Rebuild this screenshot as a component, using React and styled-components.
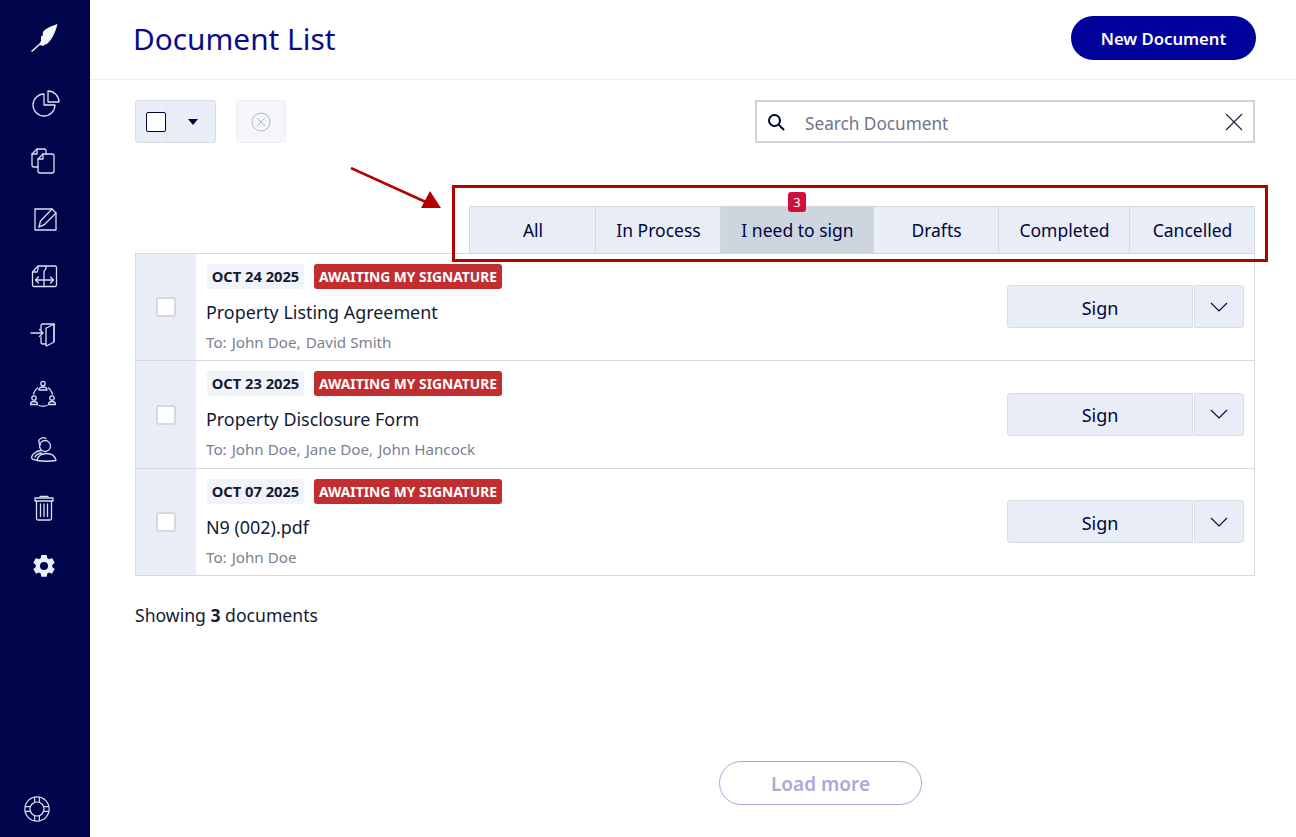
import React from 'react';
import styled, { createGlobalStyle } from 'styled-components';

const GlobalStyle = createGlobalStyle`
  html, body { margin: 0; padding: 0; height: 837px; overflow: hidden; background: #fff; }
  body { font-family: "Noto Sans", "Open Sans", sans-serif; color: #00063f; }
  * { box-sizing: border-box; }
`;

const Page = styled.div`
  display: flex;
  width: 1296px;
  height: 837px;
`;

const Sidebar = styled.nav`
  width: 90px;
  flex: none;
  background: #00044a;
  display: flex;
  flex-direction: column;
  align-items: center;
`;

const LogoSlot = styled.div`
  height: 75px;
  width: 100%;
  display: flex;
  align-items: center;
  justify-content: center;
`;

const NavItem = styled.a`
  height: 57.75px;
  width: 100%;
  display: flex;
  align-items: center;
  justify-content: center;
`;

const GearItem = styled(NavItem)`
  padding-right: 2px;
`;

const HelpItem = styled(NavItem)`
  margin-top: auto;
  height: 56px;
  padding-right: 16px;
`;

const Main = styled.main`
  flex: 1;
  min-width: 0;
`;

const Header = styled.header`
  height: 80px;
  border-bottom: 1px solid #eceef1;
  display: flex;
  align-items: center;
  justify-content: space-between;
  padding: 0 40px 4px 43px;
`;

const Title = styled.h1`
  margin: 2px 0 0;
  font-size: 29.8px;
  font-weight: 400;
  color: #0a0a8c;
`;

const NewButton = styled.button`
  width: 185px;
  height: 44px;
  border: 0;
  border-radius: 22px;
  background: #00009b;
  color: #fff;
  padding: 2px 0 0;
  font: 600 16.7px "Noto Sans", sans-serif;
`;

const Content = styled.div`
  padding: 20px 41px 0 45px;
`;

const Toolbar = styled.div`
  display: flex;
  align-items: flex-start;
  height: 43px;
`;

const SelectGroup = styled.div`
  width: 81px;
  height: 43px;
  display: flex;
  background: #e8edf6;
  border: 1px solid #d9dee6;
  border-radius: 3px;
`;

const SelectCheck = styled.div`
  width: 31px;
  display: flex;
  align-items: center;
  justify-content: flex-end;
  border-right: 1px solid #dfe4ed;
`;

const CheckMark = styled.span`
  display: block;
  width: 20px;
  height: 20px;
  background: #fff;
  border: 1.5px solid #00063f;
  border-radius: 2px;
`;

const SelectArrow = styled.div`
  flex: 1;
  display: flex;
  align-items: center;
  justify-content: center;
  padding-left: 4px;
  &::after {
    content: '';
    border-left: 5.5px solid transparent;
    border-right: 5.5px solid transparent;
    border-top: 6px solid #00063f;
  }
`;

const ClearButton = styled.div`
  width: 50px;
  height: 43px;
  margin-left: 20px;
  background: #f4f6f9;
  border: 1px solid #eceff3;
  border-radius: 3px;
  display: flex;
  align-items: center;
  justify-content: center;
`;

const SearchBox = styled.div`
  width: 500px;
  height: 43px;
  margin-left: auto;
  border: 2px solid #cfd3d8;
  display: flex;
  align-items: center;
  padding: 0 10px;
`;

const SearchInput = styled.input`
  flex: 1;
  min-width: 0;
  border: 0;
  outline: 0;
  margin-left: 20px;
  padding: 3px 0 0;
  font: 400 17.2px "Noto Sans", sans-serif;
  color: #00063f;
  &::placeholder { color: #70748c; opacity: 1; }
`;

const TabBar = styled.div`
  position: relative;
  margin: 63px 0 0 334px;
  display: grid;
  grid-template-columns: 125px 125px 153px 125px 131px 125px;
  height: 47px;
  background: #e8edf6;
  border: 1px solid #d5d9dd;
  border-bottom: 0;
`;

const Tab = styled.div`
  position: relative;
  display: flex;
  align-items: center;
  justify-content: center;
  padding-left: 1px;
  font-size: 17.5px;
  color: #00063f;
  background: ${(p) => (p.$active ? '#cdd5df' : 'transparent')};
  & + & { border-left: 1px solid #d5d9dd; }
`;

const TabBadge = styled.span`
  position: absolute;
  top: -15px;
  left: 50%;
  transform: translateX(-50%);
  width: 18px;
  height: 20px;
  border-radius: 3px;
  background: #d0103a;
  color: #fff;
  font-size: 13px;
  line-height: 20px;
  text-align: center;
`;

const HighlightFrame = styled.div`
  position: absolute;
  top: -22px;
  left: -18px;
  right: -14px;
  bottom: -9px;
  border: 3px solid #b30000;
  pointer-events: none;
`;

const PointerArrow = styled.svg`
  position: absolute;
  top: -40px;
  left: -120px;
  width: 92px;
  height: 44px;
`;

const DocList = styled.div`
  border: 1px solid #d5d9dd;
`;

const Row = styled.div`
  height: ${(p) => p.$h}px;
  display: flex;
  & + & { border-top: 1px solid #d5d9dd; }
`;

const CheckCell = styled.div`
  width: 60px;
  flex: none;
  background: #e8edf6;
  display: flex;
  align-items: center;
  justify-content: center;
`;

const RowCheck = styled.span`
  display: block;
  width: 20px;
  height: 20px;
  background: #fff;
  border: 2px solid #d5d9dd;
  border-radius: 3px;
`;

const RowBody = styled.div`
  flex: 1;
  min-width: 0;
  padding: 10px 0 0 10px;
`;

const Tags = styled.div`
  display: flex;
  gap: 10px;
  margin-left: 1px;
`;

const DateTag = styled.span`
  height: 25px;
  width: 97px;
  background: #f0f3f7;
  border-radius: 3px;
  color: #141a33;
  font-size: 14.7px;
  font-weight: 700;
  line-height: 25px;
  text-align: center;
`;

const StatusTag = styled.span`
  height: 25px;
  width: 188px;
  background: #c22d2f;
  border-radius: 3px;
  color: #fff;
  font-size: 13.8px;
  font-weight: 700;
  line-height: 25px;
  text-align: center;
`;

const DocName = styled.div`
  margin-top: 11px;
  font-size: 17.9px;
  line-height: 24px;
  color: #141a33;
`;

const Recipients = styled.div`
  margin-top: 8px;
  font-size: 15.2px;
  line-height: 20px;
  color: #7d8092;
`;

const RecipientName = styled.span`
  margin-left: 5px;
`;

const RowActions = styled.div`
  display: flex;
  align-items: center;
  padding: 0 10px 1px 0;
  gap: 1px;
`;

const SignButton = styled.button`
  width: 186px;
  height: 43px;
  padding: 2px 0 0;
  border: 1px solid #d9dee6;
  border-radius: 3px 0 0 3px;
  background: #e8edf6;
  color: #00063f;
  font: 400 18px "Noto Sans", sans-serif;
`;

const CaretButton = styled.button`
  width: 50px;
  height: 43px;
  border: 1px solid #d9dee6;
  border-radius: 0 3px 3px 0;
  background: #e8edf6;
  display: flex;
  align-items: center;
  justify-content: center;
  padding: 0;
`;

const Summary = styled.div`
  margin-top: 27px;
  font-size: 17.6px;
  line-height: 24px;
  color: #141a33;
  b { font-weight: 700; }
`;

const LoadMore = styled.button`
  display: block;
  width: 203px;
  height: 44px;
  margin: 134px 0 0 584px;
  padding: 2px 0 0;
  border: 1px solid #aca9d8;
  border-radius: 22px;
  background: #fff;
  color: #aca9d8;
  font: 600 19px "Noto Sans", sans-serif;
`;

const Line = styled.svg`
  display: block;
  fill: none;
  stroke: #d9dff2;
  stroke-width: 1.3;
  stroke-linejoin: round;
  stroke-linecap: round;
`;

const Icon = ({ children, size = 30 }) => (
  <Line width={size} height={size} viewBox="0 0 30 30">{children}</Line>
);

const navIcons = [
  <Icon key="pie">
    <g transform="translate(1 0)">
      <path d="M13 5v11h11a11 11 0 1 1-11-11z" />
      <path d="M17 2a11 11 0 0 1 11 11H17z" />
    </g>
  </Icon>,
  <Icon key="docs">
    <g transform="translate(-1 0)">
      <path d="M9 20H5a2 2 0 0 1-2-2V7l5-5h7a2 2 0 0 1 2 2v3" />
      <path d="M8 2v5H3" />
      <path d="M14 7h9a2 2 0 0 1 2 2v15a2 2 0 0 1-2 2H11a2 2 0 0 1-2-2V12z" />
      <path d="M14 7v5H9" />
    </g>
  </Icon>,
  <Icon key="edit">
    <path d="M26 9v17H5V5h17" />
    <path d="M9 23l1.500-6L22 5l4 4-11.500 11.500z" />
    <path d="M9 23l5.500-2.500" />
  </Icon>,
  <Icon key="transfer">
    <path d="M8 4h17a1.500 1.500 0 0 1 1.500 1.500V23a1.500 1.500 0 0 1-1.500 1.500H4A1.500 1.500 0 0 1 2.500 23V10L8 4z" />
    <path d="M8 4.500c.5 2 0 4-1 5.500H3" />
    <path d="M16 4.500c.5 2-.5 3.500-2 4.500v15.500" />
    <path d="M5.500 18h18M8.500 15l-3 3 3 3M20.500 15l3 3-3 3" />
  </Icon>,
  <Icon key="door">
    <path d="M11 10V6a2 2 0 0 1 2-2h11v17.500" />
    <path d="M11 17v5a2 2 0 0 0 2 2h3" />
    <path d="M16.500 8L24 4v18l-7.500 4a.5.5 0 0 1-.5-.5V8.500a.5.5 0 0 1 .5-.5z" />
    <path d="M1 13h12M9.500 9.500l3.500 3.500-3.500 3.500" />
  </Icon>,
  <Icon key="team">
    <g transform="translate(-2 0)">
      <circle cx="15" cy="5.500" r="2.200" />
      <path d="M11 12c0-2 1.500-3 4-3s4 1 4 3z" />
      <circle cx="6" cy="20" r="2.200" />
      <path d="M2.500 26.500c0-2 1.300-3 3.500-3s3.500 1 3.500 3z" />
      <circle cx="24" cy="20" r="2.200" />
      <path d="M20.500 26.500c0-2 1.300-3 3.500-3s3.500 1 3.500 3z" />
      <path d="M9.500 10a11 11 0 0 0-4 6M20.500 10a11 11 0 0 1 4 6M11 27.500a11 11 0 0 0 8 0" />
    </g>
  </Icon>,
  <Icon key="people">
    <circle cx="15" cy="11" r="5.500" />
    <path d="M10.500 10A5 5 0 0 1 9 5a5 5 0 0 1 7-1.500" />
    <path d="M7 25.500C8 20.500 12 18.500 16.500 18.500S25 20.500 26 25.500Q16.500 27 7 25.500z" />
    <path d="M11 15.500C6 16 2 19.500 1.500 22.500 2 24.500 4 25 7 25" />
    <path d="M11.500 18C8 18.500 6 20 5 22" />
  </Icon>,
  <Icon key="trash">
    <path d="M6.500 8v17.500A1.500 1.500 0 0 0 8 27h12a1.500 1.500 0 0 0 1.500-1.500V8" />
    <path d="M5 8V5h18v3z" />
    <path d="M10 3.500h8M10.500 11v12.500M14 11v12.500M17.500 11v12.500" />
  </Icon>,
];

const GearIcon = () => (
  <svg width="24" height="24" viewBox="0 0 24 24" fill="#eaf0fb">
    <path fillRule="evenodd" d="M9.300 1h5.400l.6 3.200 1.700 1 3-1.100 2.700 4.700-2.500 2.100v2l2.500 2.100-2.700 4.700-3-1.100-1.700 1-.6 3.200H9.300l-.6-3.200-1.700-1-3 1.100L1.300 15l2.500-2.100v-2L1.300 8.800 4 4.100l3 1.100 1.700-1zM12 8a4 4 0 1 0 0 8 4 4 0 0 0 0-8z" />
  </svg>
);

const rows = [
  { h: 106, date: 'OCT 24 2025', name: 'Property Listing Agreement', to: ['John Doe', 'David Smith'] },
  { h: 108, date: 'OCT 23 2025', name: 'Property Disclosure Form', to: ['John Doe', 'Jane Doe', 'John Hancock'] },
  { h: 107, date: 'OCT 07 2025', name: 'N9 (002).pdf', to: ['John Doe'] },
];

const tabs = ['All', 'In Process', 'I need to sign', 'Drafts', 'Completed', 'Cancelled'];

export default function App() {
  return (
    <Page>
      <GlobalStyle />
      <Sidebar>
        <LogoSlot>
          <svg width="30" height="30" viewBox="0 0 30 30" fill="#f4f6fb">
            <path d="M27.500 1C22 3 16 5 13 9l-.5 4-1.500.5V18l-2 3-8 7 1 1 8-7 3 1 2-1.500 2-.5C22 17 25.500 9 27.500 1z" />
          </svg>
        </LogoSlot>
        {navIcons.map((icon, i) => <NavItem key={i}>{icon}</NavItem>)}
        <GearItem><GearIcon /></GearItem>
        <HelpItem>
          <Icon size={28}>
            <circle cx="15" cy="15" r="13" />
            <circle cx="15" cy="15" r="7.500" />
            <path d="M12.500 2.500v5.500M17.500 2.500v5.500M12.500 22v5.500M17.500 22v5.500M2.500 12.500h5.500M2.500 17.500h5.500M22 12.500h5.500M22 17.500h5.500" />
          </Icon>
        </HelpItem>
      </Sidebar>
      <Main>
        <Header>
          <Title>Document List</Title>
          <NewButton>New Document</NewButton>
        </Header>
        <Content>
          <Toolbar>
            <SelectGroup>
              <SelectCheck><CheckMark /></SelectCheck>
              <SelectArrow />
            </SelectGroup>
            <ClearButton>
              <svg width="20" height="20" viewBox="0 0 20 20" fill="none" stroke="#b4b9c0" strokeWidth="1">
                <circle cx="10" cy="10" r="9" />
                <path d="M6 6l8 8M14 6l-8 8" />
              </svg>
            </ClearButton>
            <SearchBox>
              <svg width="18" height="18" viewBox="0 0 18 18" fill="none" stroke="#00063f" strokeWidth="2" strokeLinecap="round">
                <circle cx="7.500" cy="7.500" r="5.500" />
                <path d="M11.800 11.800L16.500 16.500" />
              </svg>
              <SearchInput placeholder="Search Document" />
              <svg width="18" height="18" viewBox="0 0 18 18" fill="none" stroke="#1b2040" strokeWidth="1.100">
                <path d="M1 1l16 16M17 1L1 17" />
              </svg>
            </SearchBox>
          </Toolbar>
          <TabBar>
            {tabs.map((t, i) => (
              <Tab key={t} $active={i === 2}>
                {t}
                {i === 2 && <TabBadge>3</TabBadge>}
              </Tab>
            ))}
            <HighlightFrame />
            <PointerArrow viewBox="0 0 92 44">
              <path d="M1 1L78 36" stroke="#b30000" strokeWidth="2.500" fill="none" />
              <path d="M91 41L71 41L80 24z" fill="#b30000" />
            </PointerArrow>
          </TabBar>
          <DocList>
            {rows.map((r) => (
              <Row key={r.date} $h={r.h}>
                <CheckCell><RowCheck /></CheckCell>
                <RowBody>
                  <Tags>
                    <DateTag>{r.date}</DateTag>
                    <StatusTag>AWAITING MY SIGNATURE</StatusTag>
                  </Tags>
                  <DocName>{r.name}</DocName>
                  <Recipients>
                    To:
                    {r.to.map((n, i) => (
                      <RecipientName key={n}>{n}{i < r.to.length - 1 ? ',' : ''}</RecipientName>
                    ))}
                  </Recipients>
                </RowBody>
                <RowActions>
                  <SignButton>Sign</SignButton>
                  <CaretButton>
                    <svg width="18" height="10" viewBox="0 0 18 10" fill="none" stroke="#00063f" strokeWidth="1.100">
                      <path d="M1 1l8 8 8-8" />
                    </svg>
                  </CaretButton>
                </RowActions>
              </Row>
            ))}
          </DocList>
          <Summary>Showing <b>3</b> documents</Summary>
          <LoadMore>Load more</LoadMore>
        </Content>
      </Main>
    </Page>
  );
}
